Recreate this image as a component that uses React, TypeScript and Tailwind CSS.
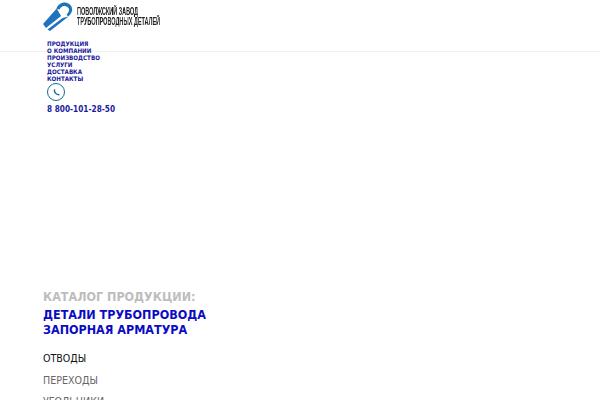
import React from "react";

const nav = ["ПРОДУКЦИЯ", "О КОМПАНИИ", "ПРОИЗВОДСТВО", "УСЛУГИ", "ДОСТАВКА", "КОНТАКТЫ"];

function Logo() {
  return (
    <svg width="31" height="30" viewBox="0 0 31 30" className="shrink-0">
      <path d="M1 22 L14.7 6.5 L19 14 L4 26 Z" fill="#1f72bd" />
      <path d="M5.5 27.5 L20.5 16 L26.5 14.5 L8 29 Z" fill="#1f72bd" />
      <path d="M14.5 7 C15.5 2.5 20 -0.2 24.5 0.8 C29 2 31 6 29.8 9.5 C29 12 27.5 13.5 26 14.5 L24.5 12.5 C26.5 11 27.5 8.5 26.8 6.5 C25.5 3.5 21 3 18.8 5.5 L17.5 7.5 Z" fill="#1f72bd" />
    </svg>
  );
}

function PhoneIcon() {
  return (
    <div className="flex h-[18px] w-[18px] items-center justify-center rounded-full border border-[#0f6f9f]">
      <svg width="7" height="7" viewBox="0 0 24 24" fill="none" stroke="#0f6f9f" strokeWidth="5" strokeLinecap="round">
        <path d="M5 3 C4 11 10 19 20 20" />
      </svg>
    </div>
  );
}

export default function App() {
  return (
    <div className="h-screen overflow-hidden bg-white font-['DejaVu_Sans_Condensed','DejaVu_Sans',sans-serif]">
      <div className="h-[52px] border-b border-[#f0f0f0] pl-[42px] pt-[2px]">
        <div className="flex items-center">
          <Logo />
          <div className="ml-[4px] origin-left scale-x-[0.55] whitespace-nowrap font-['Liberation_Sans',sans-serif] text-[10px] font-bold leading-[10px] text-[#222] will-change-transform">
            <div>ПОВОЛЖСКИЙ ЗАВОД</div>
            <div>ТРУБОПРОВОДНЫХ ДЕТАЛЕЙ</div>
          </div>
        </div>
        <div className="pl-[5px] pt-[9px]">
          {nav.map((n) => (
            <div key={n} className="text-[6.2px] font-bold leading-[6.9px] text-[#1a1a9c]">{n}</div>
          ))}
          <div className="mt-[1px]"><PhoneIcon /></div>
          <div className="mt-[2px] text-[8.2px] font-bold leading-[12px] text-[#1a1a9c]">8 800-101-28-50</div>
        </div>
      </div>
      <div className="pl-[43px] pt-[237px]">
        <div className="text-[12.46px] font-bold leading-[16px] text-[#bdbdbd]">КАТАЛОГ ПРОДУКЦИИ:</div>
        <div className="mt-[2px] text-[12.46px] font-bold leading-[15px] text-[#0b0bc4]">
          <div>ДЕТАЛИ ТРУБОПРОВОДА</div>
          <div>ЗАПОРНАЯ АРМАТУРА</div>
        </div>
        <div className="mt-[11px] text-[10.6px] leading-[21.5px]">
          <div className="text-[#111]">ОТВОДЫ</div>
          <div className="text-[#666]">ПЕРЕХОДЫ</div>
          <div className="text-[#666]">УГОЛЬНИКИ</div>
        </div>
      </div>
    </div>
  );
}
